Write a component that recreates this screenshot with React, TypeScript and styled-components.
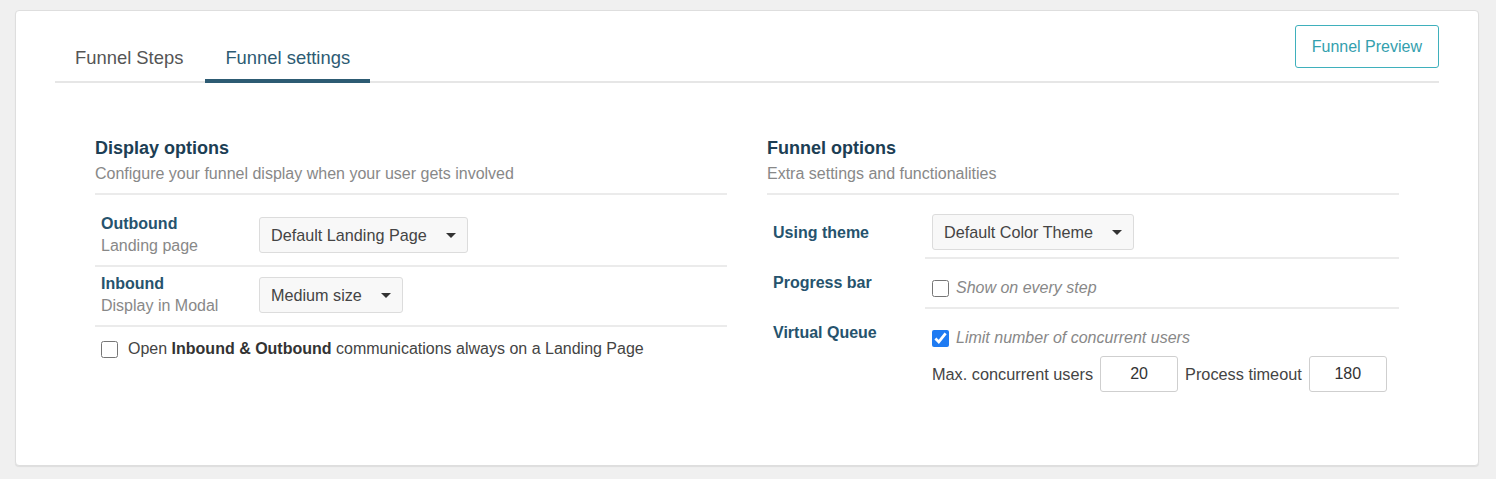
import React, { FC } from "react";
import styled, { createGlobalStyle } from "styled-components";

const GlobalStyle = createGlobalStyle`
  body {
    margin: 0;
    background: #f0f0f0;
    font-family: "Liberation Sans", Arial, sans-serif;
    color: #444;
  }
  * {
    box-sizing: border-box;
  }
`;

const Select: FC<{ value: string }> = ({ value }) => (
  <SelectBox>
    <span>{value}</span>
    <Caret />
  </SelectBox>
);

const App: FC = () => {
  return (
    <Page>
      <GlobalStyle />
      <Card>
        <Header>
          <Tabs>
            <Tab>Funnel Steps</Tab>
            <Tab $active>Funnel settings</Tab>
          </Tabs>
          <PreviewButton>Funnel Preview</PreviewButton>
        </Header>
        <Columns>
          <section>
            <SectionHead>
              <Title>Display options</Title>
              <Subtitle>Configure your funnel display when your user gets involved</Subtitle>
            </SectionHead>
            <List>
              <DisplayRow>
                <div>
                  <Name>Outbound</Name>
                  <Hint>Landing page</Hint>
                </div>
                <div>
                  <Select value="Default Landing Page" />
                </div>
              </DisplayRow>
              <DisplayRow>
                <div>
                  <Name>Inbound</Name>
                  <Hint>Display in Modal</Hint>
                </div>
                <div>
                  <Select value="Medium size" />
                </div>
              </DisplayRow>
              <CheckRow>
                <Checkbox type="checkbox" />
                <span>
                  Open <b>Inbound &amp; Outbound</b> communications always on a Landing Page
                </span>
              </CheckRow>
            </List>
          </section>
          <section>
            <SectionHead>
              <Title>Funnel options</Title>
              <Subtitle>Extra settings and functionalities</Subtitle>
            </SectionHead>
            <List>
              <OptionRow>
                <OptionLabel $center>Using theme</OptionLabel>
                <OptionValue $first>
                  <Select value="Default Color Theme" />
                </OptionValue>
              </OptionRow>
              <OptionRow>
                <OptionLabel>Progress bar</OptionLabel>
                <OptionValue>
                  <CheckLine>
                    <Checkbox type="checkbox" />
                    <Italic>Show on every step</Italic>
                  </CheckLine>
                </OptionValue>
              </OptionRow>
              <OptionRow>
                <OptionLabel>Virtual Queue</OptionLabel>
                <OptionValue $last>
                  <CheckLine>
                    <Checkbox type="checkbox" defaultChecked />
                    <Italic>Limit number of concurrent users</Italic>
                  </CheckLine>
                  <Limits>
                    <span>Max. concurrent users</span>
                    <NumberInput defaultValue="20" />
                    <span>Process timeout</span>
                    <NumberInput defaultValue="180" />
                  </Limits>
                </OptionValue>
              </OptionRow>
            </List>
          </section>
        </Columns>
      </Card>
    </Page>
  );
};

export default App;

const Page = styled.div`
  padding: 10px 17px 13px 15px;
`;

const Card = styled.div`
  height: 456px;
  padding: 14px 39px 0 39px;
  background: #ffffff;
  border: 1px solid #dedede;
  border-radius: 4px;
  box-shadow: 0 1px 1px rgba(0, 0, 0, 0.08);
`;

const Header = styled.div`
  display: flex;
  justify-content: space-between;
  align-items: flex-start;
  border-bottom: 2px solid #e6e6e6;
`;

const Tabs = styled.div`
  display: flex;
  gap: 2px;
`;

const Tab = styled.div<{ $active?: boolean }>`
  padding: 21px 20px 9px;
  margin-bottom: -2px;
  font-size: 18.4px;
  line-height: 24px;
  color: ${p => (p.$active ? "#2d5b73" : "#555555")};
  border-bottom: 4px solid ${p => (p.$active ? "#2d5b73" : "transparent")};
  cursor: pointer;
`;

const PreviewButton = styled.button`
  height: 43px;
  padding: 0 16px;
  font-family: inherit;
  font-size: 16px;
  color: #33a0ae;
  background: #ffffff;
  border: 1px solid #3fb0bc;
  border-radius: 3px;
  cursor: pointer;
`;

const Columns = styled.div`
  display: grid;
  grid-template-columns: 1fr 1fr;
  column-gap: 40px;
  padding: 53px 40px 0;
`;

const SectionHead = styled.div`
  padding-bottom: 9px;
  border-bottom: 2px solid #ebebeb;
`;

const Title = styled.h2`
  margin: 0;
  font-size: 18px;
  line-height: 24px;
  font-weight: bold;
  color: #1c3e54;
`;

const Subtitle = styled.p`
  margin: 4px 0 0;
  font-size: 16px;
  line-height: 20px;
  color: #888888;
`;

const List = styled.div`
  margin-top: 12px;
`;

const DisplayRow = styled.div`
  display: grid;
  grid-template-columns: 158px 1fr;
  align-items: center;
  padding: 6px 6px 8px;
  border-bottom: 2px solid #ebebeb;
`;

const Name = styled.div`
  font-size: 16px;
  line-height: 22px;
  font-weight: bold;
  color: #26536d;
`;

const Hint = styled.div`
  font-size: 16px;
  line-height: 22px;
  color: #888888;
`;

const SelectBox = styled.div`
  display: inline-flex;
  align-items: center;
  gap: 19px;
  height: 36px;
  padding: 0 11px;
  font-size: 16.2px;
  color: #444444;
  background: #f8f8f8;
  border: 1px solid #dcdcdc;
  border-radius: 3px;
`;

const Caret = styled.span`
  width: 0;
  height: 0;
  border-left: 5px solid transparent;
  border-right: 5px solid transparent;
  border-top: 5px solid #333333;
`;

const CheckRow = styled.label`
  display: flex;
  align-items: center;
  gap: 10px;
  padding: 12px 6px;
  font-size: 16px;
  line-height: 20px;
  color: #444444;

  b {
    color: #333333;
  }
`;

const Checkbox = styled.input`
  width: 17px;
  height: 17px;
  margin: 0;
  accent-color: #1f7bf2;
`;

const OptionRow = styled.div`
  display: grid;
  grid-template-columns: 158px 1fr;
`;

const OptionLabel = styled.div<{ $center?: boolean }>`
  align-self: ${p => (p.$center ? "center" : "start")};
  padding: ${p => (p.$center ? "0 6px" : "13px 6px 0")};
  font-size: 16px;
  line-height: 22px;
  font-weight: bold;
  color: #26536d;
`;

const OptionValue = styled.div<{ $first?: boolean; $last?: boolean }>`
  padding: ${p => (p.$first ? "7px" : "17px 7px 7px")};
  border-bottom: ${p => (p.$last ? "none" : "2px solid #ebebeb")};
`;

const CheckLine = styled.label`
  display: flex;
  align-items: center;
  gap: 7px;
  line-height: 24px;
`;

const Italic = styled.span`
  font-size: 16px;
  font-style: italic;
  color: #888888;
`;

const Limits = styled.div`
  display: flex;
  align-items: center;
  gap: 7px;
  margin-top: 6px;
  font-size: 16.3px;
  color: #444444;
`;

const NumberInput = styled.input`
  width: 78px;
  height: 36px;
  padding: 0 8px;
  font-family: inherit;
  font-size: 16px;
  color: #333333;
  text-align: center;
  border: 1px solid #cfcfcf;
  border-radius: 3px;
  outline: none;
`;
